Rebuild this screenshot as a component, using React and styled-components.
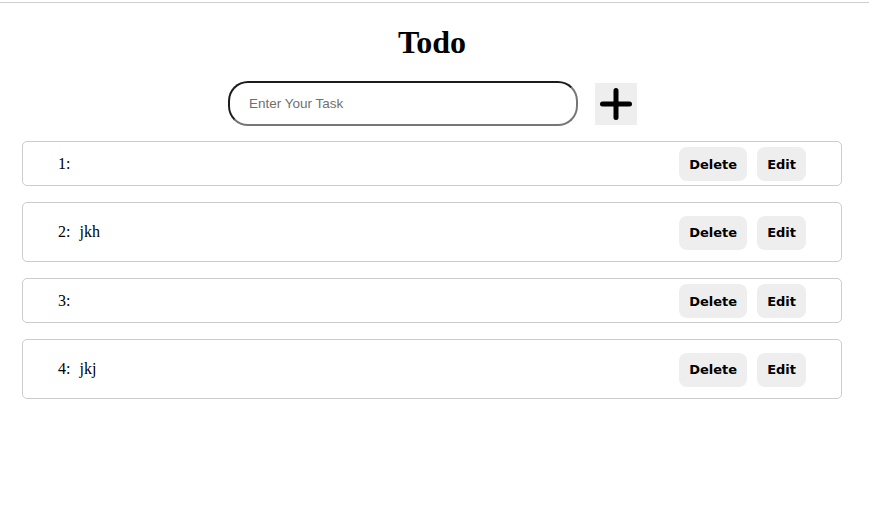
import React, { useState } from "react";
import styled, { createGlobalStyle } from "styled-components";

const GlobalStyle = createGlobalStyle`
  body {
    margin: 0;
    background: #ffffff;
    font-family: "Liberation Serif", "Times New Roman", serif;
  }
`;

const initialTodos = [
  { id: 1, text: "" },
  { id: 2, text: "jkh" },
  { id: 3, text: "" },
  { id: 4, text: "jkj" },
];

export default function App() {
  const [todos] = useState(initialTodos);
  const [task, setTask] = useState("");

  return (
    <>
      <GlobalStyle />
      <Page>
        <Title>Todo</Title>
        <InputRow>
          <TaskInput
            placeholder="Enter Your Task"
            value={task}
            autoFocus
            onChange={(e) => setTask(e.target.value)}
          />
          <AddButton aria-label="add">
            <svg width="32" height="34" viewBox="0 0 32 34">
              <path
                d="M16 3.5 V30.5 M2.5 17 H29.5"
                stroke="#000"
                strokeWidth="5"
                strokeLinecap="round"
                fill="none"
              />
            </svg>
          </AddButton>
        </InputRow>
        <List>
          {todos.map((todo, index) => (
            <TodoRow key={todo.id} $tall={todo.text !== ""}>
              <Label>
                {index + 1}:
                {todo.text && <TaskText>{todo.text}</TaskText>}
              </Label>
              <Actions>
                <ActionButton>Delete</ActionButton>
                <ActionButton>Edit</ActionButton>
              </Actions>
            </TodoRow>
          ))}
        </List>
      </Page>
    </>
  );
}

const Page = styled.div`
  margin-top: 2px;
  border-top: 1px solid #cfcfcf;
  display: flex;
  flex-direction: column;
  align-items: center;
`;

const Title = styled.h1`
  margin: 21px 0 0 -5px;
  font-size: 32px;
  line-height: 37px;
  font-weight: bold;
  color: #000;
`;

const InputRow = styled.div`
  display: flex;
  align-items: center;
  gap: 17px;
  margin-top: 20px;
  margin-left: -4px;
`;

const TaskInput = styled.input`
  box-sizing: border-box;
  width: 350px;
  height: 45px;
  padding: 0 19px;
  border-width: 2px;
  border-style: solid;
  border-color: #1c1c1c #767676 #767676 #1c1c1c;
  border-radius: 20px;
  font-family: "Liberation Sans", Arial, sans-serif;
  font-size: 13.5px;
  color: #000;
  outline: none;

  &::placeholder {
    color: #707070;
  }
`;

const AddButton = styled.button`
  width: 42px;
  height: 42px;
  padding: 0;
  border: none;
  background: #eeeeee;
  display: flex;
  align-items: center;
  justify-content: center;
  cursor: pointer;
`;

const List = styled.div`
  align-self: flex-start;
  margin: 15px 0 0 22px;
  width: 820px;
  display: flex;
  flex-direction: column;
  gap: 16px;
`;

const TodoRow = styled.div`
  box-sizing: border-box;
  height: ${(p) => (p.$tall ? "60px" : "45px")};
  border: 1px solid #cccccc;
  border-radius: 5px;
  padding: 0 35px;
  display: flex;
  align-items: center;
  justify-content: space-between;
`;

const Label = styled.div`
  font-size: 16px;
  color: #000;
`;

const TaskText = styled.span`
  margin-left: 9px;
`;

const Actions = styled.div`
  display: flex;
  gap: 10px;
  padding-top: 1px;
`;

const ActionButton = styled.button`
  height: 34px;
  padding: 0 10px;
  border: none;
  border-radius: 8px;
  background: #eeeeee;
  font-family: "DejaVu Sans", Verdana, sans-serif;
  font-size: 13px;
  font-weight: bold;
  color: #000;
  cursor: pointer;
`;
